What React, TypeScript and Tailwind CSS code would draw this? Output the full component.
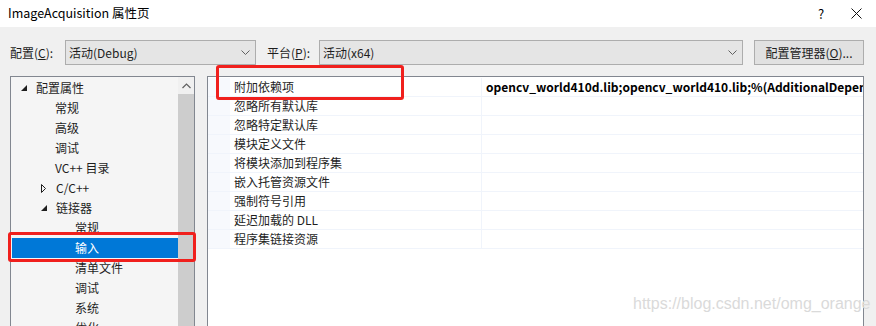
import { ReactNode } from "react";

const UI_FONT = '"Noto Sans CJK SC", "Noto Sans", sans-serif';

type TreeItem = {
    label: ReactNode;
    indent: number;
    arrow?: "open" | "closed";
    selected?: boolean;
};

const treeItems: TreeItem[] = [
    { label: "配置属性", indent: 0, arrow: "open" },
    { label: "常规", indent: 1 },
    { label: "高级", indent: 1 },
    { label: "调试", indent: 1 },
    { label: "VC++ 目录", indent: 1 },
    { label: "C/C++", indent: 1, arrow: "closed" },
    { label: "链接器", indent: 1, arrow: "open" },
    { label: "常规", indent: 2 },
    { label: "输入", indent: 2, selected: true },
    { label: "清单文件", indent: 2 },
    { label: "调试", indent: 2 },
    { label: "系统", indent: 2 },
    { label: "优化", indent: 2 },
];

const gridRows = [
    { name: "附加依赖项", value: "opencv_world410d.lib;opencv_world410.lib;%(AdditionalDependencies)" },
    { name: "忽略所有默认库", value: "" },
    { name: "忽略特定默认库", value: "" },
    { name: "模块定义文件", value: "" },
    { name: "将模块添加到程序集", value: "" },
    { name: "嵌入托管资源文件", value: "" },
    { name: "强制符号引用", value: "" },
    { name: "延迟加载的 DLL", value: "" },
    { name: "程序集链接资源", value: "" },
];

// text-start x for each indent level, relative to panel inner edge (x=11)
const indentPad = ["pl-[25px]", "pl-[44px]", "pl-[64px]"];
const arrowPad = ["pl-[10px]", "pl-[30px]", "pl-[50px]"];

const Chevron = () => (
    <svg width="9" height="6" viewBox="0 0 9 6" className="shrink-0">
        <path d="M0.5 0.5 L4.5 4.5 L8.5 0.5" fill="none" stroke="#606060" strokeWidth="1" />
    </svg>
);

const Select = ({ text, className }: { text: string; className: string }) => (
    <div
        className={`h-[25px] flex items-center justify-between bg-[#e5e5e5] border border-[#adadad] pl-[3px] pr-[5px] ${className}`}
    >
        <span>{text}</span>
        <Chevron />
    </div>
);

const TreeArrow = ({ kind }: { kind: "open" | "closed" }) =>
    kind === "open" ? (
        <svg width="6" height="6" viewBox="0 0 6 6" className="shrink-0">
            <path d="M6 0 L6 6 L0 6 Z" fill="#1e1e1e" />
        </svg>
    ) : (
        <svg width="5" height="9" viewBox="0 0 5 9" className="shrink-0">
            <path d="M0.5 0.5 L4.5 4.5 L0.5 8.5 Z" fill="none" stroke="#1e1e1e" strokeWidth="1" />
        </svg>
    );

export default function App() {
    return (
        <div
            className="relative w-[876px] h-[326px] overflow-hidden bg-[#f0f0f0] text-[12px] text-[#1e1e1e]"
            style={{ fontFamily: UI_FONT }}
        >
            {/* title bar */}
            <div className="h-[27px] bg-white flex items-center pl-[8px]">
                <span className="flex-1 text-[12.5px] text-black">ImageAcquisition 属性页</span>
                <span className="w-[20px] text-center text-[13px] text-black">?</span>
                <div className="w-[45px] flex justify-center pl-[6px]">
                    <svg width="11" height="11" viewBox="0 0 11 11">
                        <path d="M0.5 0.5 L10.5 10.5 M10.5 0.5 L0.5 10.5" stroke="#111" strokeWidth="1" />
                    </svg>
                </div>
            </div>

            {/* configuration row */}
            <div className="flex items-center h-[25px] mt-[13px] pl-[10px] leading-none">
                <span className="w-[55px]">
                    配置(<span className="underline">C</span>):
                </span>
                <Select text="活动(Debug)" className="w-[191px]" />
                <span className="w-[52px] ml-[11px]">
                    平台(<span className="underline">P</span>):
                </span>
                <Select text="活动(x64)" className="w-[424px]" />
                <div className="ml-[11px] w-[110px] h-[25px] flex items-center justify-center bg-[#e1e1e1] border border-[#adadad]">
                    配置管理器(<span className="underline">O</span>)...
                </div>
            </div>

            {/* panels */}
            <div className="flex mt-[11px] pl-[10px] h-[260px]">
                {/* tree */}
                <div className="w-[185px] border border-[#828790] bg-[#f5f5f5] flex">
                    <div className="flex-1 pt-[1px] leading-none">
                        {treeItems.map((item, i) => (
                            <div
                                key={i}
                                className={`h-[20px] flex items-center ${
                                    item.selected ? "bg-[#0078d7] text-white ml-[1px]" : ""
                                } ${item.arrow ? arrowPad[item.indent] : indentPad[item.indent]}`}
                            >
                                {item.arrow && (
                                    <span className="w-[15px] flex justify-start">
                                        <TreeArrow kind={item.arrow} />
                                    </span>
                                )}
                                <span className={item.selected ? "-ml-[1px]" : ""}>{item.label}</span>
                            </div>
                        ))}
                    </div>
                    <div className="w-[16px] bg-[#f0f0f0] flex flex-col">
                        <div className="h-[17px] flex items-center justify-center">
                            <svg width="9" height="6" viewBox="0 0 9 6">
                                <path d="M0.5 5 L4.5 1 L8.5 5" fill="none" stroke="#606060" strokeWidth="1.2" />
                            </svg>
                        </div>
                        <div className="flex-1 bg-[#cdcdcd]" />
                    </div>
                </div>

                {/* property grid */}
                <div className="ml-[12px] w-[657px] border border-[#828790] bg-white pt-[1px] leading-none">
                    {gridRows.map((row, i) => (
                        <div key={i} className="h-[19px] flex border-b border-[#f0f4fb]">
                            <div className="w-[22px] bg-[#f7f9fd] shrink-0" />
                            <div className="w-[252px] shrink-0 flex items-center pl-[4px] border-r border-[#f0f4fb]">
                                {row.name}
                            </div>
                            <div className="flex-1 min-w-0 flex items-center pl-[4px] overflow-hidden whitespace-nowrap font-bold text-black">
                                {row.value}
                            </div>
                        </div>
                    ))}
                </div>
            </div>

            {/* red annotation boxes */}
            <div className="absolute left-[216px] top-[65px] w-[188px] h-[35px] border-[3px] border-[#f0201d] rounded-[3px]" />
            <div className="absolute left-[8px] top-[232px] w-[188px] h-[30px] border-[3px] border-[#f0201d] rounded-[3px]" />

            {/* watermark */}
            <div
                className="absolute left-[633px] top-[296px] text-[16px] leading-none text-[#dadada]"
                style={{ fontFamily: '"Liberation Sans", Arial, sans-serif' }}
            >
                https://blog.csdn.net/omg_orange
            </div>
        </div>
    );
}
